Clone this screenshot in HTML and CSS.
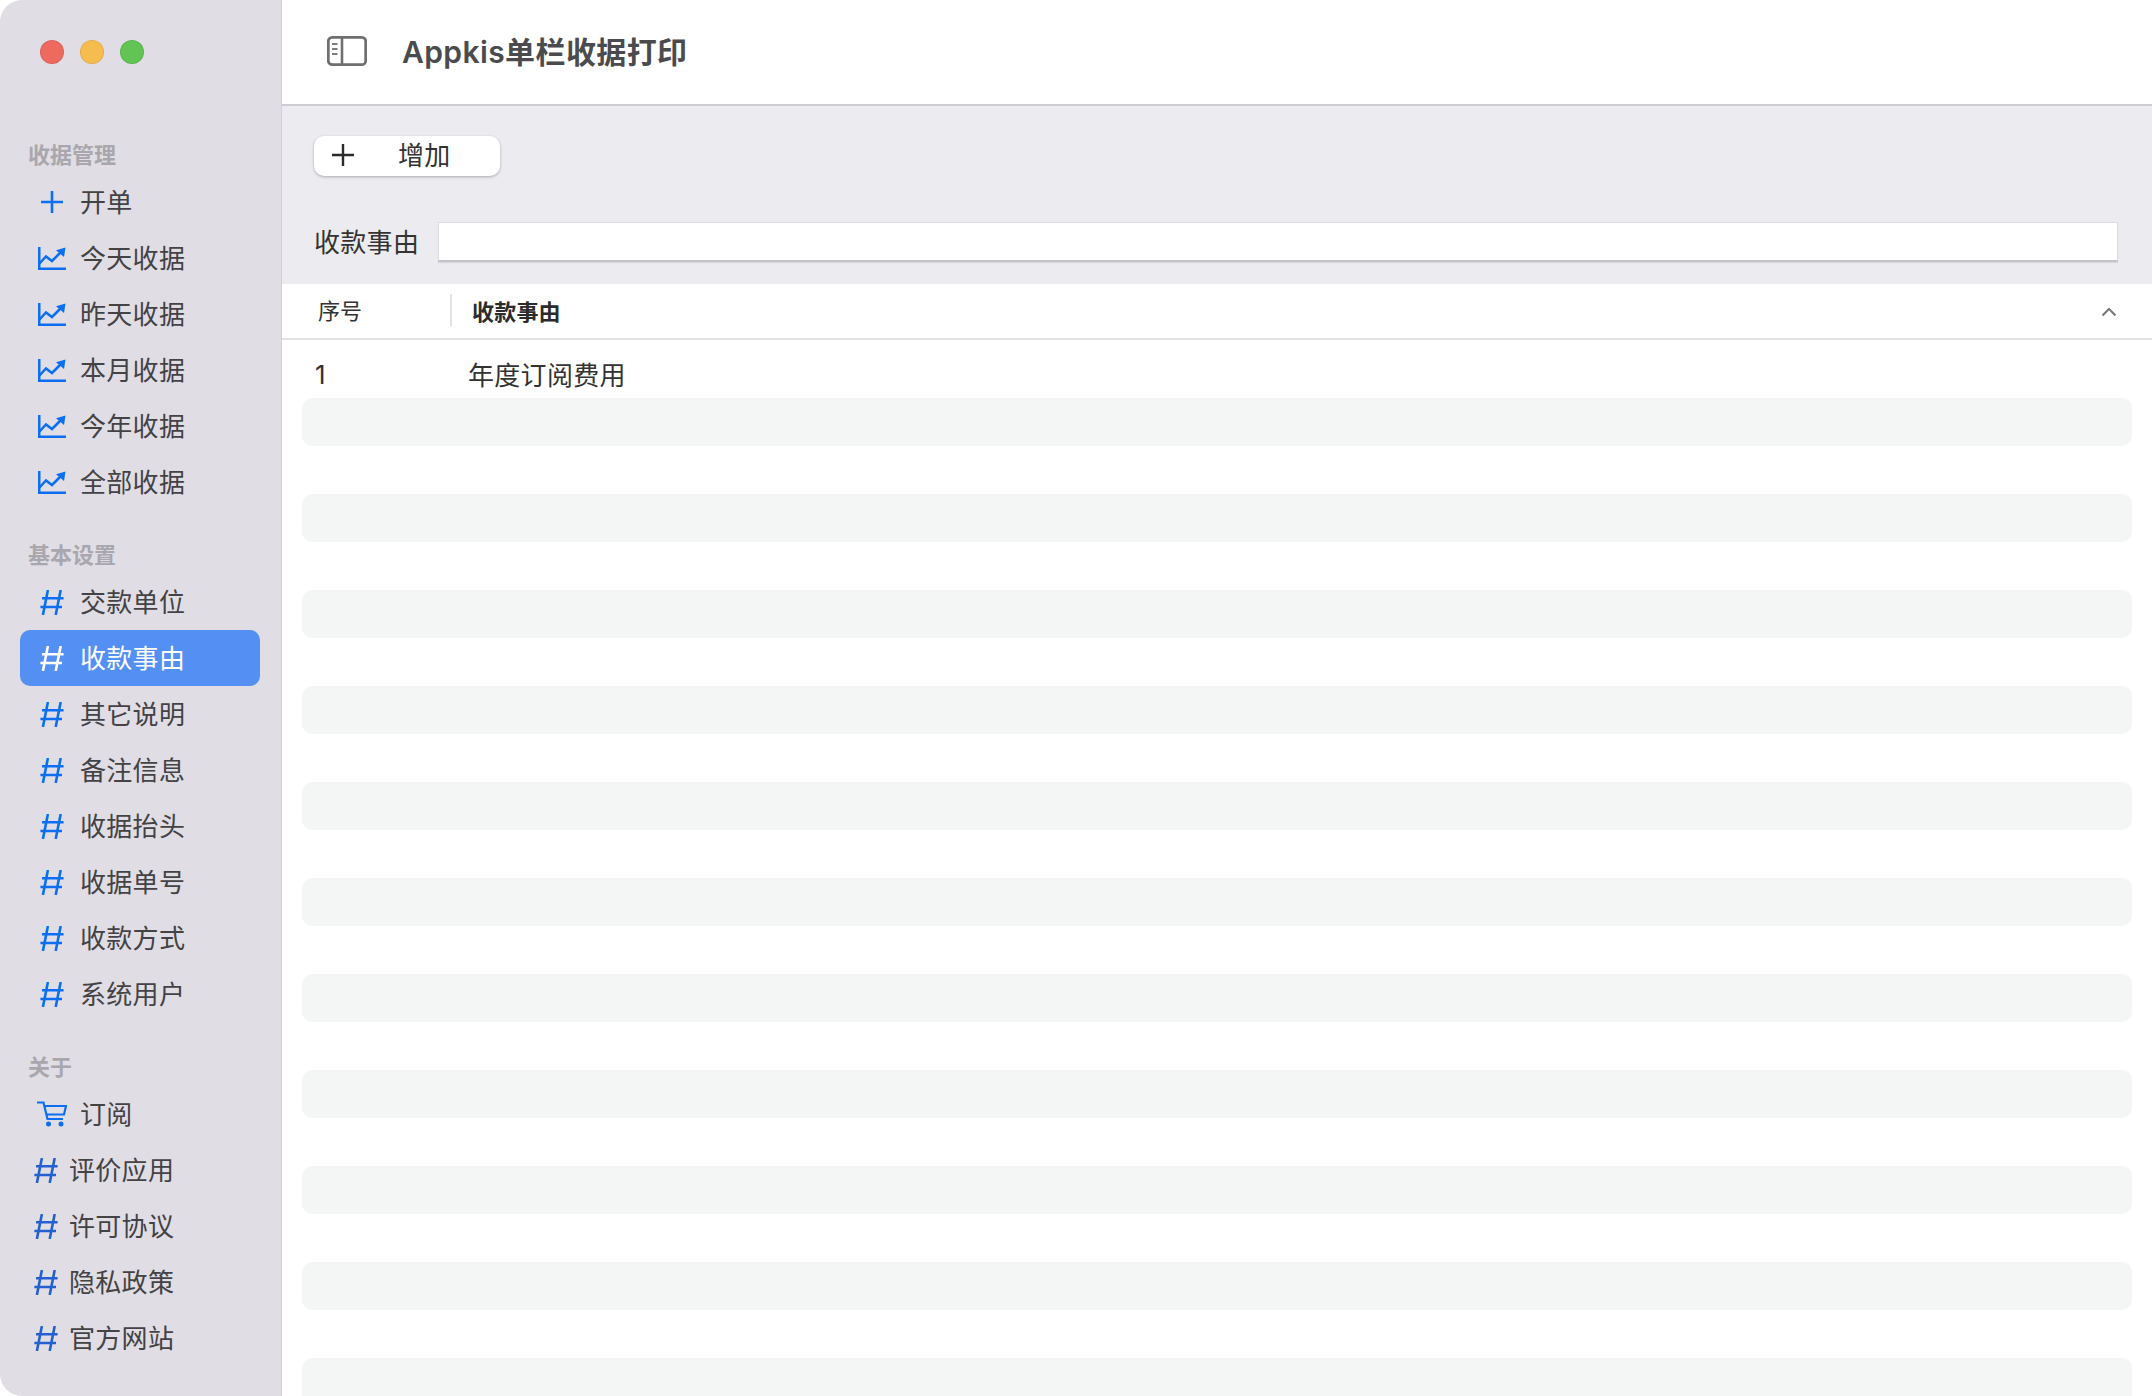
FILE: index.html
```html
<!DOCTYPE html>
<html lang="zh-CN">

<head>
    <meta charset="utf-8" />
    <title>Appkis单栏收据打印</title>
    <link rel="stylesheet" href="styles.css">
</head>

<body>
    <svg class="defs" width="0" height="0">
        <symbol id="i-hash" viewBox="0 0 24 25">
            <path d="M7.9 0 L2.9 25 M20.7 0 L15.7 25 M2 8.2 H23.6 M0.4 17 H22 " fill="none" stroke="currentColor" stroke-width="2.6" />
        </symbol>
        <symbol id="i-chart" viewBox="0 0 28 24">
            <path d="M1.2 1 V22.7 H28" fill="none" stroke="currentColor" stroke-width="2.6" />
            <path d="M1.5 17.5 L8 10.5 L14 15 L22 7" fill="none" stroke="currentColor" stroke-width="2.5" />
            <path d="M18 4.2 L27.5 1.5 L26 11 Z" fill="currentColor" />
        </symbol>
    </svg>

    <div class="window">
        <!-- 側欄 -->
        <aside class="sidebar">
            <div class="lights">
                <span class="light red"></span>
                <span class="light yellow"></span>
                <span class="light green"></span>
            </div>

            <section class="side-group">
                <h2>收据管理</h2>
                <a class="side-item">
                    <svg class="ic-plus" width="22" height="22" viewBox="0 0 22 22"><path d="M11 0 V22 M0 11 H22" fill="none" stroke="currentColor" stroke-width="2.6" /></svg>
                    <span>开单</span>
                </a>
                <a class="side-item"><svg class="ic-chart" width="28" height="24"><use href="#i-chart" /></svg><span>今天收据</span></a>
                <a class="side-item"><svg class="ic-chart" width="28" height="24"><use href="#i-chart" /></svg><span>昨天收据</span></a>
                <a class="side-item"><svg class="ic-chart" width="28" height="24"><use href="#i-chart" /></svg><span>本月收据</span></a>
                <a class="side-item"><svg class="ic-chart" width="28" height="24"><use href="#i-chart" /></svg><span>今年收据</span></a>
                <a class="side-item"><svg class="ic-chart" width="28" height="24"><use href="#i-chart" /></svg><span>全部收据</span></a>
            </section>

            <section class="side-group">
                <h2>基本设置</h2>
                <a class="side-item"><svg class="ic-hash" width="24" height="25"><use href="#i-hash" /></svg><span>交款单位</span></a>
                <a class="side-item active"><svg class="ic-hash" width="24" height="25"><use href="#i-hash" /></svg><span>收款事由</span></a>
                <a class="side-item"><svg class="ic-hash" width="24" height="25"><use href="#i-hash" /></svg><span>其它说明</span></a>
                <a class="side-item"><svg class="ic-hash" width="24" height="25"><use href="#i-hash" /></svg><span>备注信息</span></a>
                <a class="side-item"><svg class="ic-hash" width="24" height="25"><use href="#i-hash" /></svg><span>收据抬头</span></a>
                <a class="side-item"><svg class="ic-hash" width="24" height="25"><use href="#i-hash" /></svg><span>收据单号</span></a>
                <a class="side-item"><svg class="ic-hash" width="24" height="25"><use href="#i-hash" /></svg><span>收款方式</span></a>
                <a class="side-item"><svg class="ic-hash" width="24" height="25"><use href="#i-hash" /></svg><span>系统用户</span></a>
            </section>

            <section class="side-group">
                <h2>关于</h2>
                <a class="side-item">
                    <svg class="ic-cart" width="30" height="26" viewBox="0 0 30 26">
                        <path d="M0 1.5 H6.5 L10.5 18 H26" fill="none" stroke="currentColor" stroke-width="2.2" />
                        <path d="M7.5 5 H29 L27 13.5 H9.5" fill="none" stroke="currentColor" stroke-width="2.2" />
                        <circle cx="11.5" cy="23" r="2.5" fill="currentColor" />
                        <circle cx="24" cy="23" r="2.5" fill="currentColor" />
                    </svg>
                    <span>订阅</span>
                </a>
                <a class="side-item tight"><svg class="ic-hash" width="24" height="25"><use href="#i-hash" /></svg><span>评价应用</span></a>
                <a class="side-item tight"><svg class="ic-hash" width="24" height="25"><use href="#i-hash" /></svg><span>许可协议</span></a>
                <a class="side-item tight"><svg class="ic-hash" width="24" height="25"><use href="#i-hash" /></svg><span>隐私政策</span></a>
                <a class="side-item tight"><svg class="ic-hash" width="24" height="25"><use href="#i-hash" /></svg><span>官方网站</span></a>
            </section>
        </aside>

        <main class="content">
            <header class="titlebar">
                <svg width="40" height="32" viewBox="0 0 40 32">
                    <rect x="1.3" y="2.3" width="37.4" height="27.4" rx="4" fill="none" stroke="#6f6f70" stroke-width="2.8" />
                    <path d="M15 2 V30" stroke="#6f6f70" stroke-width="2.6" />
                    <path d="M5 9 H10.5 M5 14 H10.5 M5 19 H10.5" stroke="#7c7c7d" stroke-width="2.2" />
                </svg>
                <h1>Appkis单栏收据打印</h1>
            </header>

            <div class="panel">
                <button class="add-btn">
                    <svg width="22" height="22" viewBox="0 0 22 22"><path d="M11 0 V22 M0 11 H22" fill="none" stroke="#2b2b2b" stroke-width="2.4" /></svg>
                    <span>增加</span>
                </button>
                <div class="search-row">
                    <label for="reason">收款事由</label>
                    <input type="text" id="reason">
                </div>
            </div>

            <!-- 表頭 -->
            <div class="table-head">
                <div class="col-no">序号</div>
                <div class="col-name">收款事由</div>
                <svg class="sort" width="16" height="10" viewBox="0 0 16 10"><path d="M1.5 8.5 L8 2 L14.5 8.5" fill="none" stroke="#777" stroke-width="2" /></svg>
            </div>

            <div class="rows">
                <div class="row"><span class="cell-no">1</span><span class="cell-name">年度订阅费用</span></div>
                <div class="row"></div>
                <div class="row"></div>
                <div class="row"></div>
                <div class="row"></div>
                <div class="row"></div>
                <div class="row"></div>
                <div class="row"></div>
                <div class="row"></div>
                <div class="row"></div>
                <div class="row"></div>
                <div class="row"></div>
                <div class="row"></div>
                <div class="row"></div>
                <div class="row"></div>
                <div class="row"></div>
                <div class="row"></div>
                <div class="row"></div>
                <div class="row"></div>
                <div class="row"></div>
                <div class="row"></div>
                <div class="row"></div>
            </div>
        </main>
    </div>
</body>
</html>
```

FILE: styles.css
```css
* {
    box-sizing: border-box;
}

html,
body {
    margin: 0;
    height: 100%;
    background: #fff;
}

body {
    font-family: "Inter", "Noto Sans CJK SC", sans-serif;
    color: #333;
    overflow: hidden;
}

.defs {
    display: block;
    height: 0;
}

.window {
    display: flex;
    height: 1396px;
    overflow: hidden;
}

/* sidebar */
.sidebar {
    width: 282px;
    flex: none;
    background: #e0dde4;
    border-right: 1px solid #d2d0d5;
    border-radius: 22px 0 0 22px;
}

.lights {
    display: flex;
    gap: 16px;
    height: 136px;
    padding: 40px 0 0 40px;
}

.light {
    width: 24px;
    height: 24px;
    border-radius: 50%;
    border: 1px solid rgba(0, 0, 0, .08);
}

.red {
    background: #ee6a5f;
}

.yellow {
    background: #f5bd4f;
}

.green {
    background: #61c454;
}

.side-group {
    margin-bottom: 26px;
}

.side-group h2 {
    margin: 0;
    height: 38px;
    line-height: 38px;
    padding-left: 28px;
    font-size: 22px;
    font-weight: 700;
    color: #a9a7ad;
}

.side-item {
    display: flex;
    align-items: center;
    position: relative;
    height: 56px;
    margin: 0 21px 0 20px;
    border-radius: 10px;
    font-size: 26px;
    letter-spacing: .3px;
    color: #434245;
}

.side-item span {
    position: absolute;
    left: 60px;
    top: 1px;
    line-height: 56px;
}

.side-item svg {
    flex: none;
    color: #0a6ff2;
}

.ic-plus {
    margin-left: 21px;
}

.ic-chart {
    margin-left: 18px;
}

.ic-hash {
    margin-left: 20px;
}

.ic-cart {
    margin-left: 17px;
}

.side-item.tight span {
    left: 49px;
}

.side-item.tight svg {
    margin-left: 14px;
    color: #2360d0;
}

.side-item.active {
    background: #5490f4;
    color: #fff;
}

.side-item.active svg {
    color: #fff;
}

/* main */
.content {
    flex: 1;
    min-width: 0;
    background: #fff;
}

.titlebar {
    display: flex;
    align-items: center;
    height: 106px;
    padding: 0 0 2px 45px;
    border-bottom: 2px solid #cdcdd0;
}

.titlebar h1 {
    margin: 0 0 2px 35px;
    font-size: 30px;
    font-weight: 600;
    letter-spacing: .4px;
    color: #4b4b4d;
}

.panel {
    height: 178px;
    padding: 30px 34px 0 32px;
    background: #ecebf0;
}

.add-btn {
    display: flex;
    align-items: center;
    width: 186px;
    height: 40px;
    padding: 0 0 2px 18px;
    border: 0;
    border-radius: 10px;
    background: #fff;
    box-shadow: 0 1px 3px rgba(0, 0, 0, .28);
    font: inherit;
    font-size: 26px;
    color: #333;
}

.add-btn span {
    margin: 0 0 3px 44px;
    letter-spacing: .3px;
}

.search-row {
    display: flex;
    gap: 19px;
    margin-top: 46px;
    font-size: 26px;
}

.search-row label {
    flex: none;
    height: 40px;
    line-height: 41px;
    letter-spacing: .3px;
}

.search-row input {
    flex: 1;
    height: 40px;
    padding: 0 8px;
    background: #fff;
    border: 1px solid #dcdbe0;
    border-bottom: 2px solid #c3c2c7;
    box-shadow: 0 1px 1px rgba(0, 0, 0, .08);
    outline: 0;
}

.table-head {
    display: flex;
    align-items: center;
    position: relative;
    height: 56px;
    padding-bottom: 2px;
    border-bottom: 2px solid #e3e3e3;
    font-size: 22px;
}

.col-no {
    width: 170px;
    padding-left: 36px;
    height: 32px;
    line-height: 34px;
    border-right: 2px solid #e3e3e3;
}

.col-name {
    padding-left: 20px;
    font-weight: 700;
    letter-spacing: .2px;
    color: #2b2b2b;
}

.sort {
    position: absolute;
    right: 35px;
    top: 23px;
}

.rows {
    padding: 10px 20px 0;
}

.row {
    display: flex;
    align-items: center;
    height: 48px;
    padding-left: 13px;
    font-size: 26px;
    color: #333;
}

.row:nth-child(even) {
    background: #f4f5f5;
    border-radius: 10px;
}

.cell-no {
    width: 153px;
}

.cell-name {
    margin-bottom: 2px;
    letter-spacing: .3px;
}
```
